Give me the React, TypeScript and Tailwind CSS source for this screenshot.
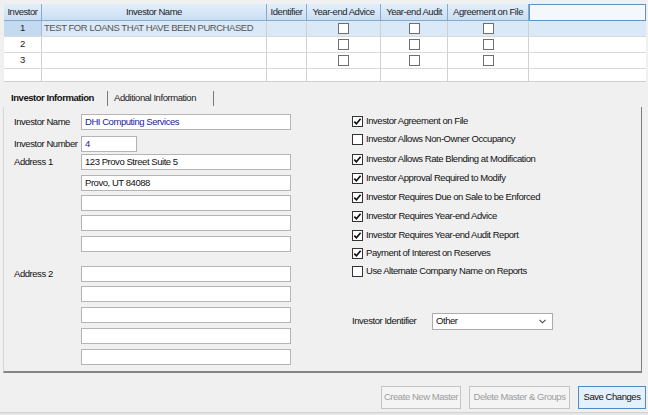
import React from 'react';

const cols = [
  { label: 'Investor', w: 38 },
  { label: 'Investor Name', w: 225 },
  { label: 'Identifier', w: 40 },
  { label: 'Year-end Advice', w: 74 },
  { label: 'Year-end Audit', w: 67 },
  { label: 'Agreement on File', w: 81 },
];

const rows = [
  { n: '1', name: 'TEST FOR LOANS THAT HAVE BEEN PURCHASED', selected: true },
  { n: '2', name: '', selected: false },
  { n: '3', name: '', selected: false },
];

const checks = [
  { label: 'Investor Agreement on File', on: true, mt: 'mt-[8px]' },
  { label: 'Investor Allows Non-Owner Occupancy', on: false, mt: 'mt-[6px]' },
  { label: 'Investor Allows Rate Blending at Modification', on: true, mt: 'mt-[8px]' },
  { label: 'Investor Approval Required to Modify', on: true, mt: 'mt-[7px]' },
  { label: 'Investor Requires Due on Sale to be Enforced', on: true, mt: 'mt-[7px]' },
  { label: 'Investor Requires Year-end Advice', on: true, mt: 'mt-[7px]' },
  { label: 'Investor Requires Year-end Audit Report', on: true, mt: 'mt-[7px]' },
  { label: 'Payment of Interest on Reserves', on: true, mt: 'mt-[6px]' },
  { label: 'Use Alternate Company Name on Reports', on: false, mt: 'mt-[6px]' },
];

function CheckBox({ on, size = 11, muted = false }: { on: boolean; size?: number; muted?: boolean }) {
  return (
    <span
      className={
        'inline-flex shrink-0 items-center justify-center bg-white border ' +
        (muted ? 'border-[#6f6f6f]' : 'border-[#333]')
      }
      style={{ width: size, height: size }}
    >
      {on && (
        <svg width="9" height="9" viewBox="0 0 9 9">
          <path d="M1.3 4.6 L3.4 6.8 L7.6 1.8" fill="none" stroke="#111" strokeWidth="1.7" />
        </svg>
      )}
    </span>
  );
}

function Field({ value = '', w = 'w-[210px]', blue = false, mt }: { value?: string; w?: string; blue?: boolean; mt: string }) {
  return (
    <div
      className={`${mt} ${w} h-[16px] bg-white border border-[#b4b4b4] flex items-center pl-[3px] ${
        blue ? 'text-[#23239a]' : 'text-[#111]'
      }`}
    >
      {value}
    </div>
  );
}

export default function App() {
  return (
    <div
      className="w-[648px] h-[415px] bg-[#f0f0f0] overflow-hidden flex flex-col text-[9.5px] tracking-[-0.45px] text-[#111]"
      style={{ fontFamily: '"Liberation Sans", Arial, sans-serif' }}
    >
      {/* grid */}
      <div className="mt-[4px] ml-[4px] w-[642px] border-b border-[#cfcfcf] bg-white">
        <div className="flex h-[17px]">
          {cols.map((c) => (
            <div
              key={c.label}
              className="flex items-center justify-center border-r border-b border-[#86a9d0] bg-gradient-to-b from-[#e3eefa] to-[#cadff3] text-[#1e1e1e]"
              style={{ width: c.w }}
            >
              {c.label}
            </div>
          ))}
          <div className="flex-1 bg-[#f4f8fc] border border-[#5f95c6]" />
        </div>
        {rows.map((r) => (
          <div key={r.n} className={`flex h-[16px] border-b border-[#dadada] ${r.selected ? 'bg-[#d9e9f8]' : 'bg-white'}`}>
            <div
              className={`w-[38px] flex items-center justify-center border-r ${
                r.selected ? 'bg-[#c3daf1] border-[#9fbfdf]' : 'border-[#d0d0d0]'
              } text-[#222]`}
            >
              {r.n}
            </div>
            <div className="w-[225px] flex items-center pl-[2px] border-r border-[#d0d0d0] text-[#555]">{r.name}</div>
            <div className="w-[40px] border-r border-[#d0d0d0]" />
            {[74, 67, 81].map((w) => (
              <div key={w} className="flex items-center justify-center border-r border-[#d0d0d0]" style={{ width: w }}>
                <CheckBox on={false} size={11} muted />
              </div>
            ))}
            <div className="flex-1" />
          </div>
        ))}
        <div className="flex h-[12px]">
          <div className="w-[38px] border-r border-[#d0d0d0]" />
          <div className="w-[225px] border-r border-[#d0d0d0]" />
          <div className="w-[40px] border-r border-[#d0d0d0]" />
          <div className="w-[74px] border-r border-[#d0d0d0]" />
          <div className="w-[67px] border-r border-[#d0d0d0]" />
          <div className="w-[81px] border-r border-[#d0d0d0]" />
          <div className="flex-1" />
        </div>
      </div>

      {/* tabs */}
      <div className="mt-[8px] ml-[3px] h-[17px] flex items-center">
        <div className="w-[104px] pl-[8px] font-bold text-[#111]">Investor Information</div>
        <div className="w-[1px] h-[15px] bg-[#7a7a7a]" />
        <div className="w-[105px] pl-[6px] text-[#222]">Additional Information</div>
        <div className="w-[1px] h-[15px] bg-[#7a7a7a]" />
      </div>

      {/* panel */}
      <div className="ml-[3px] w-[639px] h-[266px] border-l border-[#d6d6d6] border-r border-r-[#7d7d7d] border-b-2 border-b-[#858585] flex">
        <div className="w-[348px] pl-[10px] flex">
          <div className="w-[67px] flex flex-col">
            <div className="mt-[7px] h-[16px] flex items-center">Investor Name</div>
            <div className="mt-[6px] h-[16px] flex items-center">Investor Number</div>
            <div className="mt-[2px] h-[16px] flex items-center">Address 1</div>
            <div className="mt-[96px] h-[16px] flex items-center">Address 2</div>
          </div>
          <div className="flex flex-col">
            <Field mt="mt-[7px]" value="DHI Computing Services" blue />
            <Field mt="mt-[6px]" value="4" blue w="w-[56px]" />
            <Field mt="mt-[2px]" value="123 Provo Street Suite 5" />
            <Field mt="mt-[5px]" value="Provo, UT 84088" />
            <Field mt="mt-[4px]" />
            <Field mt="mt-[4px]" />
            <Field mt="mt-[5px]" />
            <Field mt="mt-[14px]" />
            <Field mt="mt-[4px]" />
            <Field mt="mt-[5px]" />
            <Field mt="mt-[5px]" />
            <Field mt="mt-[5px]" />
          </div>
        </div>
        <div className="flex flex-col">
          {checks.map((c) => (
            <div key={c.label} className={`${c.mt} h-[12px] flex items-center gap-[3px]`}>
              <CheckBox on={c.on} />
              <span>{c.label}</span>
            </div>
          ))}
          <div className="mt-[36px] h-[16px] flex items-center">
            <span className="w-[80px]">Investor Identifier</span>
            <div className="w-[121px] h-[17px] bg-white border border-[#acacac] flex items-center pl-[3px] pr-[6px] justify-between text-[#111]">
              <span>Other</span>
              <svg width="7" height="5" viewBox="0 0 7 5">
                <path d="M0.5 0.8 L3.5 3.8 L6.5 0.8" fill="none" stroke="#444" strokeWidth="1.1" />
              </svg>
            </div>
          </div>
        </div>
      </div>

      {/* buttons */}
      <div className="mt-[13px] h-[23px] flex justify-end gap-[8px] pr-[2px]">
        <div className="w-[80px] border border-[#c4c4c4] bg-[#f4f4f4] text-[#9d9d9d] flex items-center justify-center">
          Create New Master
        </div>
        <div className="w-[101px] border border-[#c4c4c4] bg-[#f4f4f4] text-[#9d9d9d] flex items-center justify-center">
          Delete Master &amp; Groups
        </div>
        <div className="w-[68px] border border-[#4f8cc4] bg-[#e4f0fb] text-[#111] flex items-center justify-center">
          Save Changes
        </div>
      </div>
      <div className="mt-auto h-[3px] border-t border-[#d2d2d2] bg-[#e6e6e6]" />
    </div>
  );
}
